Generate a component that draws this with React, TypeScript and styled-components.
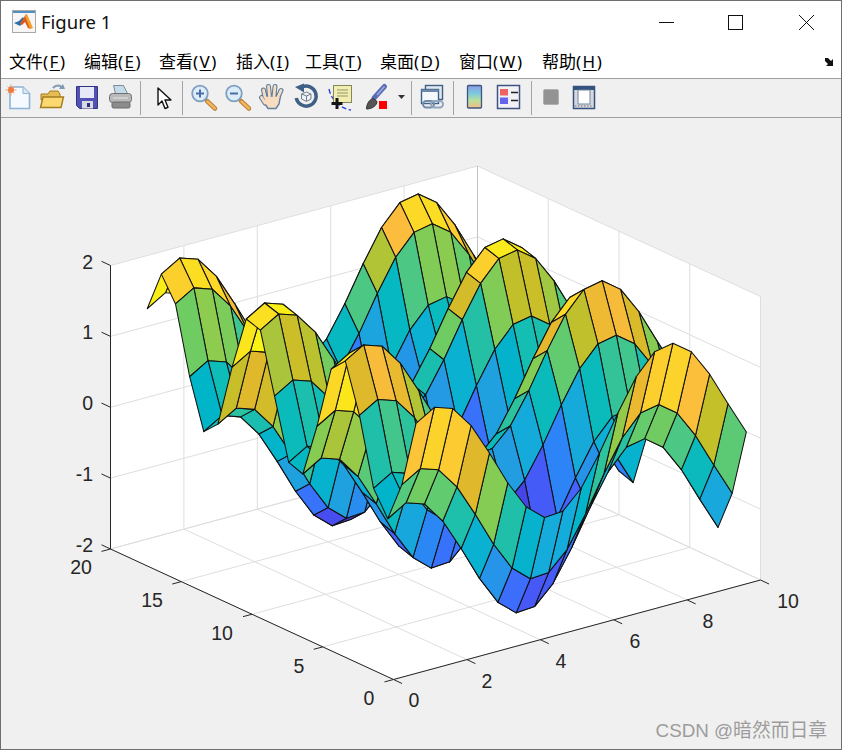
import React from "react";
import styled, { createGlobalStyle } from "styled-components";

const GlobalStyle = createGlobalStyle`
  html, body { margin: 0; padding: 0; background: #ffffff; }
`;

const uiFont = `"Noto Sans", "Noto Sans CJK SC", sans-serif`;

const Window = styled.div`
  width: 842px;
  height: 750px;
  box-sizing: border-box;
  border: 1px solid #6e6e6e;
  display: flex;
  flex-direction: column;
  background: #ffffff;
  font-family: ${uiFont};
  overflow: hidden;
`;

const TitleBar = styled.div`
  height: 41px;
  display: flex;
  align-items: center;
  padding-left: 10px;
  flex-shrink: 0;
`;

const Title = styled.div`
  margin-left: 4px;
  font-size: 18.5px;
  color: #111111;
`;

const WindowButtons = styled.div`
  margin-left: auto;
  align-self: flex-start;
  margin-top: 6px;
  display: flex;
`;

const WindowButton = styled.svg`
  width: 71px;
  height: 30px;
  display: block;
`;

const MenuBar = styled.div`
  height: 36px;
  display: flex;
  align-items: center;
  padding: 1px 5px 0 8px;
  flex-shrink: 0;
  box-sizing: border-box;
`;

const MenuItem = styled.div<{ $w: number }>`
  width: ${(p) => p.$w}px;
  font-size: 17px;
  color: #000000;
  white-space: nowrap;
  u { text-underline-offset: 2px; }
`;

const MenuKey = styled.span`
  letter-spacing: 1.5px;
`;

const DockArrow = styled.svg`
  margin-left: auto;
  margin-top: 3px;
  margin-right: -1px;
  width: 14px;
  height: 14px;
`;

const Toolbar = styled.div`
  height: 38px;
  display: flex;
  align-items: center;
  padding-left: 0;
  background: #f0f0f0;
  border-top: 1px solid #a0a0a0;
  border-bottom: 1px solid #a0a0a0;
  flex-shrink: 0;
`;

const Slot = styled.svg<{ $w?: number }>`
  width: ${(p) => p.$w ?? 34}px;
  height: 38px;
  display: block;
  flex-shrink: 0;
`;

const Sep = styled.div<{ $l: number; $r: number }>`
  width: 1px;
  height: 34px;
  background: #a4a4a4;
  margin-left: ${(p) => p.$l}px;
  margin-right: ${(p) => p.$r}px;
  flex-shrink: 0;
`;

const FigureArea = styled.div`
  position: relative;
  flex: 1;
  background: #f0f0f0;
`;

const Plot = styled.svg`
  display: block;
  width: 840px;
  height: 630px;
`;

const TickLabel = styled.text`
  font-family: "Liberation Sans", Arial, sans-serif;
  font-size: 19.5px;
  fill: #262626;
`;

const Watermark = styled.div`
  position: absolute;
  right: 14px;
  bottom: 7px;
  font-size: 18.8px;
  color: #9c9c9c;
  font-family: "Liberation Sans", "Noto Sans CJK SC", sans-serif;
  white-space: nowrap;
`;

// surf(x, y, sin(x) + cos(y)) with x = 1:0.5:10, y = 1:20
const xs = Array.from({ length: 19 }, (_, i) => 1 + i * 0.5);
const ys = Array.from({ length: 20 }, (_, i) => 1 + i);
const zAt = (x: number, y: number) => Math.sin(x) + Math.cos(y);

const project = (x: number, y: number, z: number): [number, number] => [
  393.5 + x * 36.7 - y * 14.15,
  679.5 - x * 9.95 - y * 6.525 - (z + 2) * 70.875,
];
const pt = (x: number, y: number, z: number) => project(x, y, z).map((v) => v.toFixed(2)).join(" ");

const parulaStops: [number, number, number, number][] = [
  [0, 0.2422, 0.1504, 0.6603],
  [0.1, 0.28, 0.28, 0.92],
  [0.17, 0.27, 0.38, 0.99],
  [0.25, 0.18, 0.5, 0.98],
  [0.33, 0.13, 0.62, 0.88],
  [0.4, 0.07, 0.68, 0.85],
  [0.468, 0, 0.71, 0.78],
  [0.51, 0.06, 0.74, 0.72],
  [0.55, 0.13, 0.75, 0.66],
  [0.6, 0.32, 0.79, 0.5],
  [0.64, 0.43, 0.8, 0.39],
  [0.68, 0.55, 0.8, 0.31],
  [0.74, 0.77, 0.75, 0.16],
  [0.79, 0.89, 0.72, 0.17],
  [0.83, 0.99, 0.74, 0.24],
  [0.88, 0.99, 0.82, 0.17],
  [1, 0.976, 0.983, 0.054],
];

const parula = (c: number) => {
  const t = Math.min(1, Math.max(0, c));
  let i = 0;
  while (i < parulaStops.length - 2 && t > parulaStops[i + 1][0]) i++;
  const a = parulaStops[i];
  const b = parulaStops[i + 1];
  const k = (t - a[0]) / (b[0] - a[0]);
  const ch = (n: number) => Math.round((a[n] + (b[n] - a[n]) * k) * 255);
  return `rgb(${ch(1)},${ch(2)},${ch(3)})`;
};

const allZ = xs.flatMap((x) => ys.map((y) => zAt(x, y)));
const zMin = Math.min(...allZ);
const zMax = Math.max(...allZ);

// back to front: the far corner is x = 10, y = 20
const faces: { d: string; fill: string }[] = [];
for (let j = ys.length - 2; j >= 0; j--) {
  for (let i = xs.length - 2; i >= 0; i--) {
    const [x0, x1, y0, y1] = [xs[i], xs[i + 1], ys[j], ys[j + 1]];
    faces.push({
      d: `M${pt(x0, y0, zAt(x0, y0))}L${pt(x1, y0, zAt(x1, y0))}L${pt(x1, y1, zAt(x1, y1))}L${pt(x0, y1, zAt(x0, y1))}Z`,
      fill: parula((zAt(x0, y0) - zMin) / (zMax - zMin)),
    });
  }
}

const xTicks = [0, 2, 4, 6, 8, 10];
const yTicks = [0, 5, 10, 15, 20];
const zTicks = [-2, -1, 0, 1, 2];

const xLabelAt: Record<number, [number, number]> = {
  0: [414, 707], 2: [487, 688], 4: [561, 668], 6: [635, 648], 8: [708, 628], 10: [788, 608],
};
const yLabelAt: Record<number, [number, number]> = {
  0: [369, 705], 5: [299, 673], 10: [222, 640], 15: [152, 607], 20: [81, 574],
};

const seg = (key: string, a: [number, number], b: [number, number], color: string) => (
  <line key={key} x1={a[0]} y1={a[1]} x2={b[0]} y2={b[1]} stroke={color} strokeWidth={1} />
);

const grid = "#dedede";
const ink = "#262626";

const Surface = () => (
  <Plot viewBox="1 118 840 630">
    <path
      d={`M${pt(0, 20, 2)}L${pt(10, 20, 2)}L${pt(10, 0, 2)}L${pt(10, 0, -2)}L${pt(0, 0, -2)}L${pt(0, 20, -2)}Z`}
      fill="#ffffff"
    />
    {xTicks.map((x) => (
      <path key={`gx${x}`} d={`M${pt(x, 0, -2)}L${pt(x, 20, -2)}L${pt(x, 20, 2)}`} fill="none" stroke={grid} />
    ))}
    {yTicks.map((y) => (
      <path key={`gy${y}`} d={`M${pt(0, y, -2)}L${pt(10, y, -2)}L${pt(10, y, 2)}`} fill="none" stroke={grid} />
    ))}
    {zTicks.map((z) => (
      <path key={`gz${z}`} d={`M${pt(0, 20, z)}L${pt(10, 20, z)}L${pt(10, 0, z)}`} fill="none" stroke={grid} />
    ))}
    {seg("back", project(10, 20, -2), project(10, 20, 2), "#c4c4c4")}

    {faces.map((f, i) => (
      <path key={i} d={f.d} fill={f.fill} stroke="#111111" strokeWidth={1.05} strokeLinejoin="round" />
    ))}

    {seg("axz", project(0, 20, -2), project(0, 20, 2), ink)}
    {seg("axx", project(0, 0, -2), project(10, 0, -2), ink)}
    {seg("axy", project(0, 0, -2), project(0, 20, -2), ink)}
    {zTicks.map((z) => {
      const a = project(0, 20, z);
      return seg(`tz${z}`, a, [a[0] - 9, a[1] - 4.2], ink);
    })}
    {xTicks.map((x) => {
      const a = project(x, 0, -2);
      return seg(`tx${x}`, a, [a[0] + 8.5, a[1] + 4], ink);
    })}
    {yTicks.map((y) => {
      const a = project(0, y, -2);
      return seg(`ty${y}`, a, [a[0] - 9, a[1] + 2.4], ink);
    })}

    {zTicks.map((z) => (
      <TickLabel key={`lz${z}`} x={93} y={project(0, 20, z)[1] + 3} textAnchor="end">
        {z}
      </TickLabel>
    ))}
    {xTicks.map((x) => (
      <TickLabel key={`lx${x}`} x={xLabelAt[x][0]} y={xLabelAt[x][1]} textAnchor="middle">
        {x}
      </TickLabel>
    ))}
    {yTicks.map((y) => (
      <TickLabel key={`ly${y}`} x={yLabelAt[y][0]} y={yLabelAt[y][1]} textAnchor="middle">
        {y}
      </TickLabel>
    ))}
  </Plot>
);

const MatlabLogo = () => (
  <svg width="26" height="26" viewBox="0 0 26 26">
    <rect x="1.500" y="1.500" width="23" height="22" fill="#f6f6f6" stroke="#a8a8a8" />
    <rect x="2" y="2" width="22" height="2" fill="#4f8fc4" />
    <path d="M3 14l5-2 4-4 2 3-5 6z" fill="#2f6fa8" />
    <path d="M9 15l3-5 3-5 5 15-3-1-3-6-3 3z" fill="#e05a1c" />
    <path d="M14 7l2-2 6 14-3 1z" fill="#f3a02b" />
  </svg>
);

const NewIcon = () => (
  <Slot viewBox="0 0 34 38">
    <path d="M9 8h13l6.500 6.500V29.500H9z" fill="#f4faff" stroke="#8db3d6" strokeWidth="1.6" />
    <path d="M22 8v6.500h6.500" fill="#d6e6f5" stroke="#8db3d6" />
    <path d="M10 5.500v11M4.500 11h11M6.500 7.500l7 7M13.500 7.500l-7 7" stroke="#f2a070" strokeWidth="1" />
    <circle cx="10" cy="11" r="3" fill="#ee7a3c" />
  </Slot>
);

const OpenIcon = () => (
  <Slot viewBox="0 0 34 38">
    <path d="M6 15h7l2-3h8l2 3v6H6z" fill="#e6bd52" stroke="#a47c1e" />
    <path d="M5.500 28.500L8 18h20.500l-2.500 10.500z" fill="#fbd870" stroke="#a47c1e" strokeWidth="1.4" />
    <path d="M18 9c3-3.500 7-3.500 9 0" fill="none" stroke="#7f9ab4" strokeWidth="2" />
    <path d="M24 10h6l-2-5z" fill="#7f9ab4" />
  </Slot>
);

const SaveIcon = () => (
  <Slot viewBox="0 0 34 38">
    <path d="M7.500 7.500h21v22h-18l-3-3z" fill="#5252b4" stroke="#34347e" />
    <rect x="11" y="8" width="14" height="11" fill="#e6e9f7" />
    <rect x="13" y="22" width="11" height="7.500" fill="#d9d9e4" />
    <rect x="18" y="24" width="3" height="4" fill="#2e2e78" />
  </Slot>
);

const PrintIcon = () => (
  <Slot viewBox="0 0 34 38">
    <path d="M10.500 6.500h10l4 8h-12z" fill="#c4dcea" stroke="#7d8a94" />
    <rect x="6.500" y="14.500" width="22" height="9" rx="3" fill="#b9b9b9" stroke="#707070" />
    <rect x="9" y="23" width="18" height="6" rx="1.500" fill="#8c8c8c" stroke="#6a6a6a" />
    <path d="M10 19h15" stroke="#e6e6e6" />
  </Slot>
);

const PointerIcon = () => (
  <Slot viewBox="0 0 34 38">
    <path
      d="M11 9v17l4-4 3 7.500 3-1.200-3-7.300h6z"
      fill="#ffffff"
      stroke="#111111"
      strokeWidth="1.4"
      strokeLinejoin="round"
    />
  </Slot>
);

const ZoomIcon = ({ plus }: { plus: boolean }) => (
  <Slot viewBox="0 0 34 38">
    <path d="M20 22l8 7.500" stroke="#b88236" strokeWidth="4.500" strokeLinecap="round" />
    <path d="M20.500 22.500l7.500 7" stroke="#f2b45c" strokeWidth="2.500" strokeLinecap="round" />
    <circle cx="13" cy="14.500" r="7.800" fill="#dcecf8" stroke="#7e9fc0" strokeWidth="1.800" />
    <path d="M9 14.500h8" stroke="#4a6fa8" strokeWidth="2" />
    {plus && <path d="M13 10.500v8" stroke="#4a6fa8" strokeWidth="2" />}
  </Slot>
);

const fingers = "M10 18L8.500 11M14.500 17L13.500 7.500M19 17L20 7.500M23 18L26 11.500M10 24L6.500 18.500";

const PanIcon = () => (
  <Slot viewBox="0 0 34 38">
    <path d={fingers} stroke="#5f7f9f" strokeWidth="5" strokeLinecap="round" />
    <path d="M9 17h16.500l-1.500 8-3 4.500h-8l-4-6z" fill="#f8dcc0" stroke="#5f7f9f" strokeWidth="1.400" />
    <path d={fingers} stroke="#f8dcc0" strokeWidth="2.800" strokeLinecap="round" />
  </Slot>
);

const RotateIcon = () => (
  <Slot viewBox="0 0 34 38">
    <path d="M13 8A10 10 0 1 1 7.300 19" fill="none" stroke="#3f5f85" strokeWidth="3.500" />
    <path d="M6 8l9-3.500v9z" fill="#3f5f85" />
    <path d="M12.500 15l5-2 4.500 2v5l-4.500 2.500-5-2.500zM12.500 15l5 2 4.500-2M17.500 17v5" fill="#eef2f6" stroke="#6f7f90" />
  </Slot>
);

const DatatipIcon = () => (
  <Slot viewBox="0 0 34 38">
    <path d="M6 10c2 10 10 19 22 21" fill="none" stroke="#2a3ae0" strokeWidth="1.300" strokeDasharray="5 2.500" />
    <rect x="10.500" y="6.500" width="18" height="17" fill="#f2eeb0" stroke="#86865c" />
    <path d="M14 11h11M14 14h11M14 17h11" stroke="#94946a" />
    <path d="M14 19v11M8.500 24.500h11" stroke="#141414" strokeWidth="3" />
  </Slot>
);

const BrushIcon = () => (
  <Slot viewBox="0 0 34 38">
    <path d="M27.500 7.500L17 19" stroke="#5a6cb4" strokeWidth="5" strokeLinecap="round" />
    <path d="M27.500 7.500L20 16" stroke="#9fb0e4" strokeWidth="1.400" />
    <path d="M9.500 30c0-5 3-10 7-10.500l3.500 3c0 4-5 7.500-10.500 7.500z" fill="#555555" stroke="#333333" />
    <rect x="22" y="22" width="8" height="8" fill="#ff0000" />
  </Slot>
);

const CaretIcon = () => (
  <Slot $w={20} viewBox="0 0 20 38">
    <path d="M7 16h7l-3.500 4z" fill="#333333" />
  </Slot>
);

const LinkIcon = () => (
  <Slot viewBox="0 0 34 38">
    <rect x="10.500" y="6.500" width="17" height="14" fill="#dfe8f2" stroke="#3f5f85" strokeWidth="1.400" />
    <rect x="6.500" y="10.500" width="17" height="14" fill="#f4f7fb" stroke="#3f5f85" strokeWidth="1.400" />
    <rect x="6.500" y="10.500" width="17" height="2.500" fill="#6d88aa" />
    <rect x="8" y="22" width="11" height="6.500" rx="3.200" fill="none" stroke="#6f8cab" strokeWidth="2" />
    <rect x="16" y="22" width="12" height="6.500" rx="3.200" fill="none" stroke="#8ea6bf" strokeWidth="2" />
  </Slot>
);

const ColorbarIcon = () => (
  <Slot viewBox="0 0 34 38">
    <defs>
      <linearGradient id="cbar" x1="0" y1="0" x2="0" y2="1">
        <stop offset="0" stopColor="#8b9ce8" />
        <stop offset="0.35" stopColor="#7cc8de" />
        <stop offset="0.65" stopColor="#b8e0a0" />
        <stop offset="1" stopColor="#f2bd84" />
      </linearGradient>
    </defs>
    <rect x="9.500" y="6.500" width="14" height="22.500" rx="1" fill="url(#cbar)" stroke="#3f5480" strokeWidth="1.300" />
  </Slot>
);

const LegendIcon = () => (
  <Slot viewBox="0 0 34 38">
    <rect x="5.500" y="6.500" width="22" height="23" fill="#f2f2f6" stroke="#3f5480" strokeWidth="1.500" />
    <rect x="8" y="10" width="8" height="6.500" fill="#ee6464" />
    <rect x="8" y="18.500" width="8" height="6.500" fill="#6464ee" />
    <path d="M19 13.500h7M19 21.500h7" stroke="#222222" strokeWidth="1.500" />
  </Slot>
);

const SquareIcon = () => (
  <Slot viewBox="0 0 34 38">
    <rect x="9.500" y="10.500" width="15" height="15" rx="1.500" fill="#939393" stroke="#b0b0b0" />
  </Slot>
);

const PlotToolsIcon = () => (
  <Slot viewBox="0 0 34 38">
    <rect x="5.500" y="7.500" width="21" height="22" fill="#d8d8dc" stroke="#34527f" strokeWidth="1.500" />
    <rect x="6" y="8" width="20" height="3" fill="#34527f" />
    <rect x="10" y="11" width="12" height="14" fill="#ffffff" stroke="#6f84a0" />
    <path d="M7 27h18" stroke="#a0a4ac" strokeWidth="2" strokeDasharray="1.500 1.500" />
  </Slot>
);

const menus: [string, string, number][] = [
  ["文件", "F", 75],
  ["编辑", "E", 75],
  ["查看", "V", 77],
  ["插入", "I", 69],
  ["工具", "T", 75],
  ["桌面", "D", 79],
  ["窗口", "W", 83],
  ["帮助", "H", 80],
];

const App = () => (
  <Window>
    <GlobalStyle />
    <TitleBar>
      <MatlabLogo />
      <Title>Figure 1</Title>
      <WindowButtons>
        <WindowButton viewBox="0 0 71 30">
          <path d="M31 15.500h15" stroke="#111111" />
        </WindowButton>
        <WindowButton viewBox="0 0 71 30">
          <rect x="29.500" y="8.500" width="14" height="14" fill="none" stroke="#111111" />
        </WindowButton>
        <WindowButton viewBox="0 0 71 30">
          <path d="M29 8l15 15M44 8L29 23" stroke="#111111" />
        </WindowButton>
      </WindowButtons>
    </TitleBar>
    <MenuBar>
      {menus.map(([label, key, w]) => (
        <MenuItem key={key} $w={w}>
          {label}
          <MenuKey>
            (<u>{key}</u>)
          </MenuKey>
        </MenuItem>
      ))}
      <DockArrow viewBox="0 0 14 14">
        <path d="M2 3h3l3 3 2-2v7H3l2-2-3-3z" fill="#111111" />
      </DockArrow>
    </MenuBar>
    <Toolbar>
      <NewIcon />
      <OpenIcon />
      <SaveIcon />
      <PrintIcon />
      <Sep $l={3} $r={6} />
      <PointerIcon />
      <Sep $l={1} $r={4} />
      <ZoomIcon plus />
      <ZoomIcon plus={false} />
      <PanIcon />
      <RotateIcon />
      <DatatipIcon />
      <BrushIcon />
      <CaretIcon />
      <Sep $l={0} $r={3} />
      <LinkIcon />
      <Sep $l={4} $r={4} />
      <ColorbarIcon />
      <LegendIcon />
      <Sep $l={5} $r={2} />
      <SquareIcon />
      <PlotToolsIcon />
    </Toolbar>
    <FigureArea>
      <Surface />
      <Watermark>CSDN @暗然而日章</Watermark>
    </FigureArea>
  </Window>
);

export default App;
